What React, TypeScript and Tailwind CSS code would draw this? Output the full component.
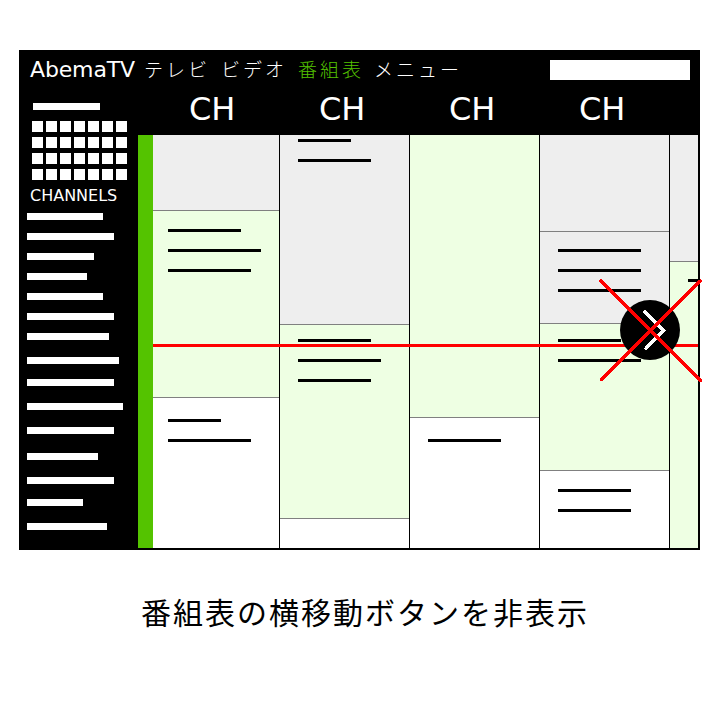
type Bar = { gap: number; w: number };
type Slot = { h: number; tone: string; bars?: Bar[] };

const sideBars: Bar[] = [
  { gap: 0, w: 76 }, { gap: 13, w: 87 }, { gap: 13, w: 67 }, { gap: 13, w: 60 },
  { gap: 13, w: 76 }, { gap: 13, w: 87 }, { gap: 13, w: 82 }, { gap: 17, w: 92 },
  { gap: 15, w: 87 }, { gap: 17, w: 96 }, { gap: 17, w: 87 }, { gap: 19, w: 71 },
  { gap: 17, w: 87 }, { gap: 15, w: 56 }, { gap: 17, w: 80 },
];

const PAST = "bg-[#eeeeee]";
const NOW = "bg-[#eeffe3]";
const NEXT = "bg-white";

// Slot heights include the 1px rule that closes each programme.
const columns: { w: number; pad: number; slots: Slot[] }[] = [
  {
    w: 127, pad: 15,
    slots: [
      { h: 76, tone: PAST },
      { h: 187, tone: NOW, bars: [{ gap: 18, w: 73 }, { gap: 17, w: 93 }, { gap: 17, w: 83 }] },
      { h: 150, tone: NEXT, bars: [{ gap: 21, w: 53 }, { gap: 17, w: 83 }] },
    ],
  },
  {
    w: 130, pad: 18,
    slots: [
      { h: 190, tone: PAST, bars: [{ gap: 4, w: 53 }, { gap: 17, w: 73 }] },
      { h: 194, tone: NOW, bars: [{ gap: 14, w: 73 }, { gap: 17, w: 83 }, { gap: 17, w: 73 }] },
      { h: 29, tone: NEXT },
    ],
  },
  {
    w: 130, pad: 18,
    slots: [
      { h: 283, tone: NOW },
      { h: 130, tone: NEXT, bars: [{ gap: 21, w: 73 }] },
    ],
  },
  {
    w: 130, pad: 18,
    slots: [
      { h: 97, tone: PAST },
      { h: 92, tone: PAST, bars: [{ gap: 17, w: 83 }, { gap: 17, w: 83 }, { gap: 17, w: 83 }] },
      { h: 147, tone: NOW, bars: [{ gap: 15, w: 63 }, { gap: 17, w: 83 }] },
      { h: 77, tone: NEXT, bars: [{ gap: 18, w: 73 }, { gap: 17, w: 73 }] },
    ],
  },
  {
    w: 28, pad: 18,
    slots: [
      { h: 127, tone: PAST },
      { h: 286, tone: NOW, bars: [{ gap: 17, w: 10 }] },
    ],
  },
];

function Header() {
  return (
    <header className="flex h-[39px] items-start justify-between pr-[8px] pl-[9px]">
      <nav className="flex pt-[5px] text-[22px] leading-[26px] whitespace-pre">
        <span className="w-[114px] tracking-[-0.15px]">AbemaTV</span>
        <div className="flex font-['Noto_Sans_CJK_JP',sans-serif] text-[19px] leading-[24px] font-light tracking-[3px]">
          <span className="w-[77px]">テレビ</span>
          <span className="w-[77px]">ビデオ</span>
          <span className="w-[76px] text-[#54c300]">番組表</span>
          <span>メニュー</span>
        </div>
      </nav>
      <div className="mt-[8px] h-[20px] w-[140px] bg-white" />
    </header>
  );
}

function Sidebar() {
  return (
    <aside className="w-[117px] shrink-0 pt-[12px]">
      <div className="ml-[12px] h-[7px] w-[67px] bg-white" />
      <div className="mt-[11px] ml-[11px] grid w-[95px] grid-cols-7 gap-x-[3px] gap-y-[5px]">
        {Array.from({ length: 28 }, (_, i) => (
          <div key={i} className="size-[11px] bg-white" />
        ))}
      </div>
      <div className="mt-[6px] ml-[9px] h-[27px] text-base leading-[20px]">CHANNELS</div>
      <div className="ml-[6px]">
        {sideBars.map((b, i) => (
          <div key={i} className="h-[7px] bg-white" style={{ width: b.w, marginTop: b.gap }} />
        ))}
      </div>
    </aside>
  );
}

function Timetable() {
  return (
    <div className="relative flex h-[413px]">
      <div className="w-[15px] bg-[#54c300]" />
      {columns.map((c, i) => (
        <div
          key={i}
          className={i < 4 ? "overflow-hidden border-r border-black" : "overflow-hidden"}
          style={{ width: c.w }}
        >
          {c.slots.map((s, j) => (
            <div
              key={j}
              className={`flex flex-col ${s.tone} ${j < c.slots.length - 1 ? "border-b border-[#808080]" : ""}`}
              style={{ height: s.h, paddingLeft: c.pad }}
            >
              {s.bars?.map((b, k) => (
                <div key={k} className="h-[3px] shrink-0 bg-black" style={{ width: b.w, marginTop: b.gap }} />
              ))}
            </div>
          ))}
        </div>
      ))}
      <div className="absolute top-[209px] right-0 left-[15px] h-[3px] bg-[#ff0000]" />
      <svg className="absolute top-[142px] left-[459px]" width="108" height="108" viewBox="597 277 108 108" fill="none" strokeLinecap="round">
        <circle cx="650" cy="330" r="30" fill="#000" />
        <path d="M645 311.8 L664 330.5 L646 348.3" stroke="#fff" strokeWidth="3.5" strokeLinejoin="round" shapeRendering="crispEdges" />
        <path d="M601 281 L700.5 380.5 M700.5 281 L601.7 379.7" stroke="#f00" strokeWidth="3.5" shapeRendering="crispEdges" />
      </svg>
    </div>
  );
}

export default function App() {
  return (
    <div className="flex h-[720px] w-[720px] flex-col items-start bg-white pt-[50px] pl-[19px] font-['DejaVu_Sans',sans-serif]">
      <div className="h-[500px] w-[681px] border-2 border-black bg-black text-white">
        <Header />
        <div className="flex">
          <Sidebar />
          <main className="w-[560px]">
            <div className="flex h-[44px] pl-[51px] text-[32px] leading-[36px]">
              {[0, 1, 2, 3].map((i) => (
                <div key={i} className="w-[130px] shrink-0">CH</div>
              ))}
            </div>
            <Timetable />
          </main>
        </div>
      </div>
      <p className="mt-[37px] ml-[122px] font-['Noto_Sans_CJK_JP',sans-serif] text-[30px] leading-[48px] tracking-[2px] whitespace-nowrap text-black">
        番組表の横移動ボタンを非表示
      </p>
    </div>
  );
}
